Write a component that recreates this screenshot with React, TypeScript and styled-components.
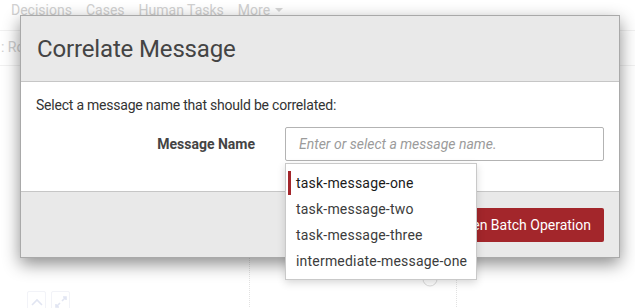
import React from "react";
import styled, { createGlobalStyle } from "styled-components";

const GlobalStyle = createGlobalStyle`
  html, body { margin: 0; padding: 0; background: #fff; }
  body { font-family: Roboto, "Liberation Sans", sans-serif; -webkit-font-smoothing: antialiased; }
  * { box-sizing: border-box; }
`;

const Page = styled.div`
  position: relative;
  width: 635px;
  height: 308px;
  overflow: hidden;
  background: #fff;
`;

const TopNav = styled.nav`
  display: flex;
  gap: 14px;
  height: 31px;
  padding-left: 11px;
  border-bottom: 1px solid #f1f1f1;
  font-size: 14px;
  line-height: 20px;
  color: #d0d0d0;
`;

const NavItem = styled.span`
  display: inline-flex;
  align-items: center;
  gap: 5px;
  height: 20px;
`;

const Caret = styled.span`
  width: 0;
  height: 0;
  border-left: 4px solid transparent;
  border-right: 4px solid transparent;
  border-top: 4px solid #d4d4d4;
`;

const Crumbs = styled.div`
  height: 35px;
  border-bottom: 1px solid #f1f1f1;
  font-size: 14px;
  line-height: 32px;
  color: #cfcfcf;
  padding-left: 1px;
`;

const Content = styled.div`
  display: grid;
  grid-template-columns: 250px 207px 1fr;
  height: 242px;
`;

const Panel = styled.div<{ $dotted?: boolean }>`
  border-right: ${(p) => (p.$dotted ? "1px dotted #e2e2e2" : "none")};
`;

const LeftPanel = styled(Panel)`
  padding: 225px 0 0 27px;
`;

const Toolbar = styled.div`
  display: flex;
  gap: 5px;
`;

const ToolButton = styled.div`
  width: 19px;
  height: 22px;
  border: 1px solid #f2f3f8;
  border-radius: 2px;
  display: flex;
  align-items: center;
  justify-content: center;
  color: #e1e5f2;
`;

const NodeMark = styled.svg`
  display: block;
  margin: 205px 0 0 172px;
`;

const Overlay = styled.div`
  position: absolute;
  inset: 0;
`;

const Modal = styled.div`
  position: absolute;
  left: 20px;
  top: 15px;
  width: 600px;
  border: 1px solid #a9a9a9;
  background: #fff;
  box-shadow: 0 6px 16px rgba(0, 0, 0, 0.45);
`;

const Header = styled.div`
  height: 66px;
  background: #e9e9e9;
  border-bottom: 1px solid #c6c6c6;
  display: flex;
  align-items: center;
  padding-left: 16px;
`;

const Title = styled.h3`
  margin: 0;
  font-size: 24px;
  font-weight: 400;
  color: #444;
  line-height: 30px;
  letter-spacing: -0.15px;
`;

const Body = styled.div`
  padding: 13px 15px 30px;
`;

const Intro = styled.p`
  margin: 0;
  font-size: 14px;
  line-height: 20px;
  color: #333;
  letter-spacing: -0.22px;
`;

const FormRow = styled.div`
  margin-top: 12px;
  display: grid;
  grid-template-columns: 219px 1fr;
  column-gap: 30px;
  align-items: center;
`;

const Label = styled.label`
  text-align: right;
  font-size: 14px;
  font-weight: 700;
  color: #444;
`;

const Field = styled.div`
  position: relative;
`;

const Input = styled.input`
  display: block;
  width: 100%;
  height: 34px;
  border: 1px solid #b3b3b3;
  border-radius: 2px;
  padding: 0 13px;
  font-family: inherit;
  font-size: 14px;
  color: #333;
  outline: none;
  &::placeholder {
    color: #9b9b9b;
    font-style: italic;
  }
`;

const Menu = styled.ul`
  position: absolute;
  top: 36px;
  left: 0;
  width: 192px;
  margin: 0;
  padding: 6px 0 5px;
  list-style: none;
  background: #fff;
  border: 1px solid #c9c9c9;
  box-shadow: 0 3px 8px rgba(0, 0, 0, 0.15);
  z-index: 2;
`;

const MenuItem = styled.li<{ $active?: boolean }>`
  position: relative;
  height: 26px;
  line-height: 26px;
  padding-left: 10px;
  font-size: 14px;
  letter-spacing: 0.2px;
  color: ${(p) => (p.$active ? "#1a1a1a" : "#3c3c3c")};
  white-space: nowrap;
  &::before {
    content: "";
    display: ${(p) => (p.$active ? "block" : "none")};
    position: absolute;
    left: 2px;
    top: 1px;
    bottom: 1px;
    width: 3px;
    background: #a3262b;
  }
`;

const Footer = styled.div`
  height: 66px;
  background: #e9e9e9;
  border-top: 1px solid #c6c6c6;
  padding: 16px 15px;
  display: flex;
  justify-content: flex-end;
`;

const PrimaryButton = styled.button`
  height: 34px;
  padding: 0 13px;
  border: none;
  border-radius: 2px;
  background: #a3262b;
  color: #fff;
  font-family: inherit;
  font-size: 14px;
  cursor: pointer;
`;

const options = [
  "task-message-one",
  "task-message-two",
  "task-message-three",
  "intermediate-message-one",
];

export default function App() {
  return (
    <>
      <GlobalStyle />
      <Page>
        <TopNav>
          <NavItem>Decisions</NavItem>
          <NavItem>Cases</NavItem>
          <NavItem>Human Tasks</NavItem>
          <NavItem>
            More <Caret />
          </NavItem>
        </TopNav>
        <Crumbs>: Root</Crumbs>
        <Content>
          <LeftPanel $dotted>
            <Toolbar>
              <ToolButton>
                <svg width="14" height="10" viewBox="0 0 14 10" fill="none">
                  <path d="M2 8 L7 3 L12 8" stroke="currentColor" strokeWidth="1.6" />
                </svg>
              </ToolButton>
              <ToolButton>
                <svg width="14" height="14" viewBox="0 0 14 14" fill="none">
                  <path d="M8 6 L12 2 M9 2 H12 V5 M6 8 L2 12 M2 9 V12 H5" stroke="currentColor" strokeWidth="1.6" />
                </svg>
              </ToolButton>
            </Toolbar>
          </LeftPanel>
          <Panel $dotted>
            <NodeMark width="16" height="16" viewBox="0 0 16 16">
              <circle cx="8" cy="8" r="7" fill="none" stroke="#dcdcdc" strokeWidth="1" />
            </NodeMark>
          </Panel>
          <Panel />
        </Content>

        <Overlay>
          <Modal>
            <Header>
              <Title>Correlate Message</Title>
            </Header>
            <Body>
              <Intro>Select a message name that should be correlated:</Intro>
              <FormRow>
                <Label>Message Name</Label>
                <Field>
                  <Input placeholder="Enter or select a message name." />
                  <Menu>
                    {options.map((o, i) => (
                      <MenuItem key={o} $active={i === 0}>
                        {o}
                      </MenuItem>
                    ))}
                  </Menu>
                </Field>
              </FormRow>
            </Body>
            <Footer>
              <PrimaryButton>Open Batch Operation</PrimaryButton>
            </Footer>
          </Modal>
        </Overlay>
      </Page>
    </>
  );
}
